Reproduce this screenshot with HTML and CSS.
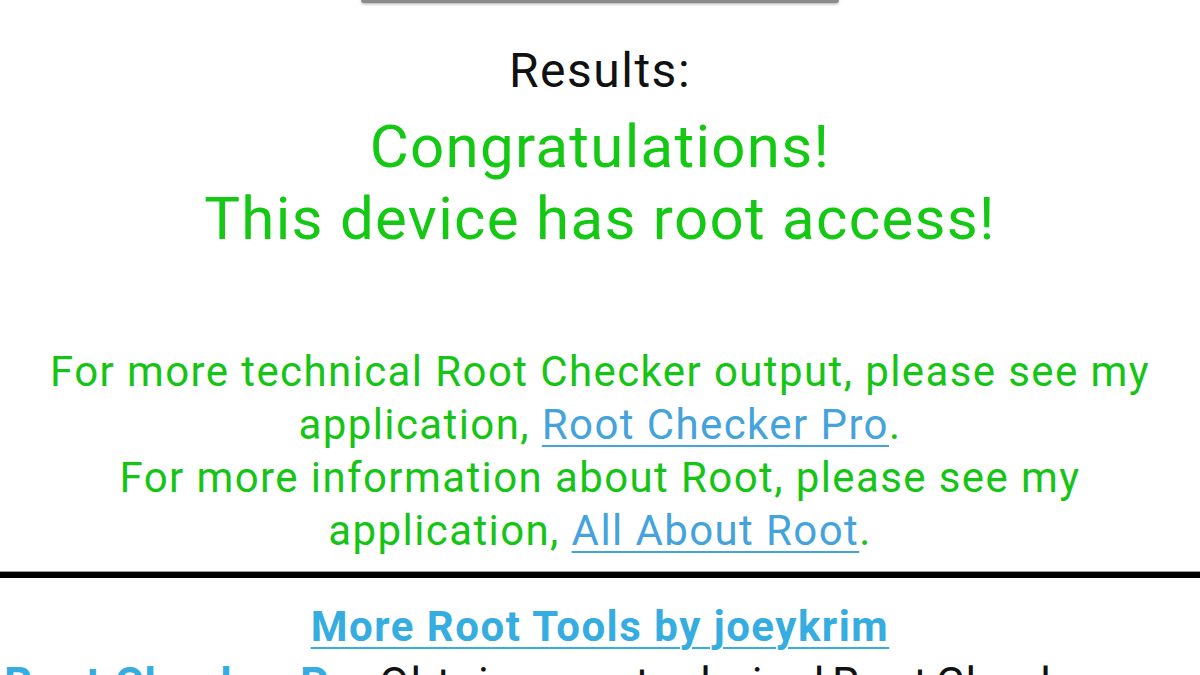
FILE: index.html
```html
<!DOCTYPE html>
<html lang="en">
<head>
<meta charset="utf-8">
<title>Root Checker</title>
<link rel="stylesheet" href="styles.css">
</head>
<body>
<div class="screen">
  <div class="button-edge"></div>
  <div class="results-label">Results:</div>
  <div class="congrats">Congratulations!<br>This device has root access!</div>
  <p class="info">For more technical Root Checker output, please see my<br>application, <a href="#" class="link">Root Checker Pro</a>.<br>For more information about Root, please see my<br>application, <a href="#" class="link">All About Root</a>.</p>
  <div class="divider"></div>
  <div class="tools-heading"><a href="#">More Root Tools by joeykrim</a></div>
  <div class="tool-row"><span class="tool-name">Root Checker Pro</span> Obtain more technical Root Checker output</div>
</div>
</body>
</html>
```

FILE: styles.css
```css
html, body {
  margin: 0;
  padding: 0;
  background: #ffffff;
}

.screen {
  width: 1200px;
  height: 675px;
  overflow: hidden;
  font-family: Roboto, "Noto Sans", sans-serif;
  text-align: center;
}

.button-edge {
  width: 478px;
  height: 3px;
  margin: 0 auto;
  background: #8a8a8a;
  border-radius: 0 0 8px 8px;
  box-shadow: 0 1px 3px rgba(0, 0, 0, 0.35);
}

.results-label {
  margin-top: 40px;
  font-size: 48px;
  line-height: 56px;
  letter-spacing: 1.5px;
  color: #111111;
}

.congrats {
  margin-top: 12px;
  font-size: 60px;
  line-height: 72px;
  letter-spacing: 1.3px;
  color: #14c814;
}

.info {
  margin: 90px 0 0;
  font-size: 42px;
  line-height: 53px;
  letter-spacing: 1.4px;
  color: #16c416;
}

.link {
  color: #45a3dc;
  text-decoration: underline;
  text-decoration-thickness: 2px;
  text-underline-offset: 6px;
}

.divider {
  margin-top: 14px;
  height: 6px;
  background: #000000;
  border-top: 1px solid #9a9a9a;
}

.tools-heading {
  margin-top: 24px;
  font-size: 42px;
  line-height: 50px;
  letter-spacing: 1.5px;
  font-weight: 700;
}

.tools-heading a {
  color: #35ade0;
  text-decoration: underline;
  text-decoration-thickness: 2px;
  text-underline-offset: 6px;
}

.tool-row {
  margin-top: 7px;
  text-align: left;
  padding: 0 4px;
  font-size: 44px;
  line-height: 50px;
  letter-spacing: 1.4px;
  word-spacing: -6px;
  color: #111111;
}

.tool-name {
  color: #35ade0;
  font-weight: 700;
  word-spacing: 0;
}
```
